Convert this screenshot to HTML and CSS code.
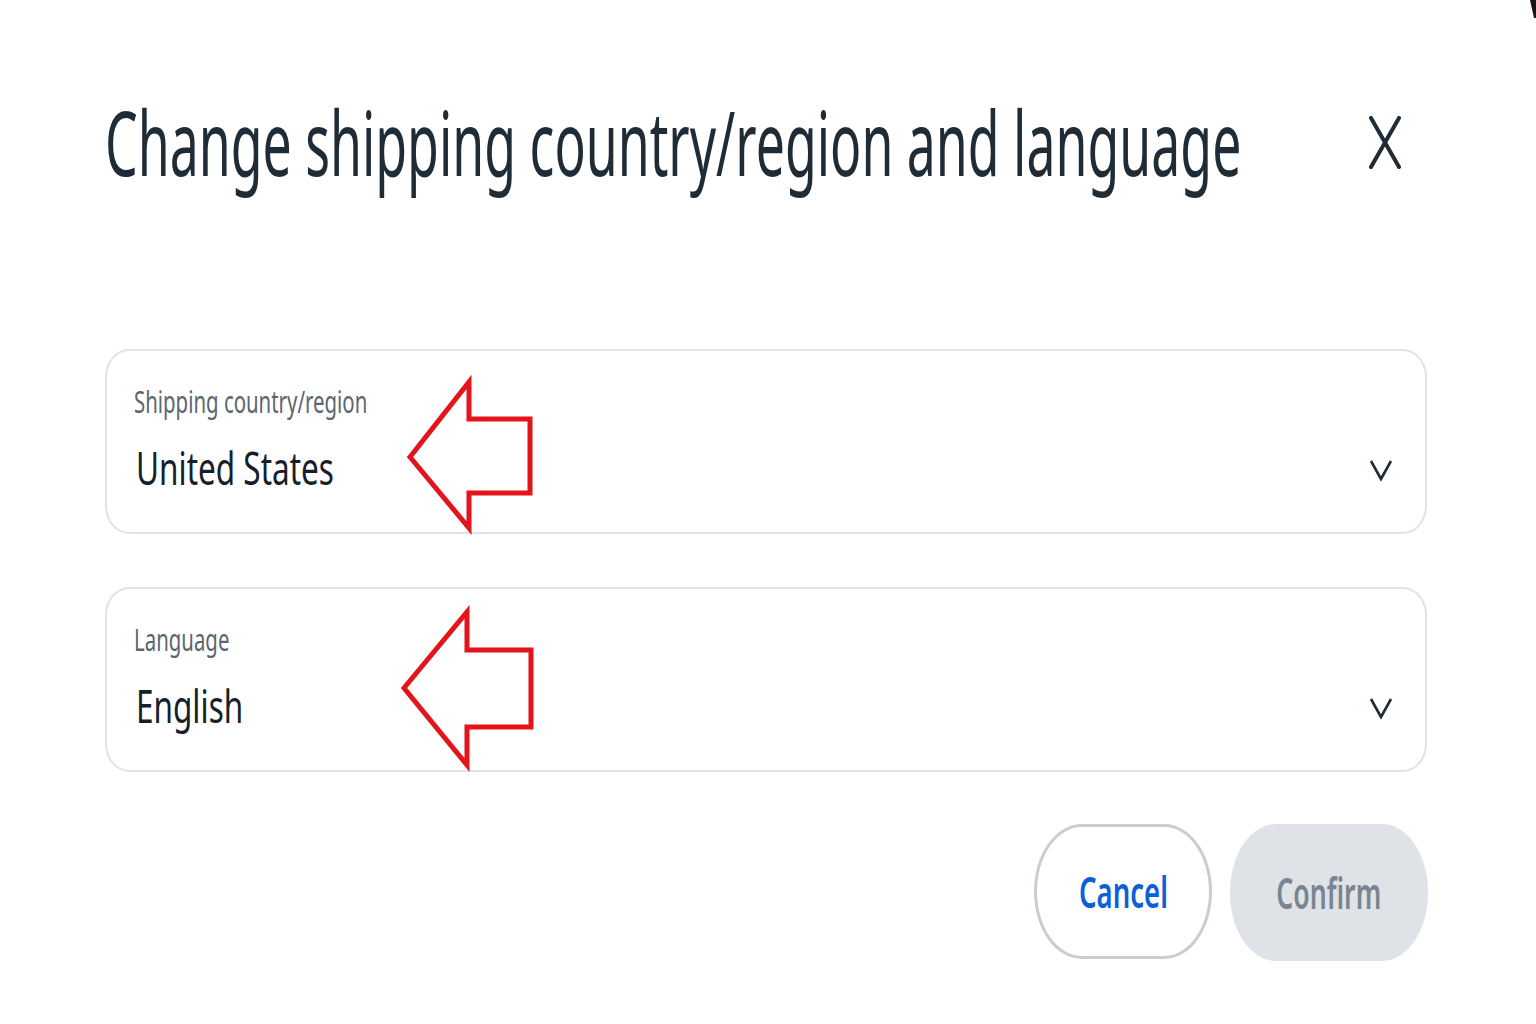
FILE: index.html
```html
<!DOCTYPE html>
<html lang="en">
<head>
<meta charset="utf-8">
<title>Change shipping country/region and language</title>
<link rel="stylesheet" href="styles.css">
</head>
<body>
<div class="dialog">
  <div class="header">
    <div class="title-wrap"><h1 class="title"><span class="tall">Change shipping country/region and language</span></h1></div>
    <svg class="close" width="34" height="53" viewBox="0 0 34 53" aria-label="Close">
      <path d="M3 2 L31 51 M31 2 L3 51" stroke="#1f2b35" stroke-width="4" stroke-linecap="round" fill="none"/>
    </svg>
  </div>

  <div class="field first">
    <div class="field-text">
      <div class="label"><span class="sq sq-label">Shipping country/region</span></div>
      <div class="value"><span class="sq sq-value">United States</span></div>
    </div>
    <svg class="chev" width="24" height="24" viewBox="0 0 24 24"><path d="M2 3 L12 21 L22 3" stroke="#1f2b35" stroke-width="2.6" fill="none" stroke-linejoin="miter"/></svg>
  </div>

  <div class="field second">
    <div class="field-text">
      <div class="label"><span class="sq sq-label">Language</span></div>
      <div class="value"><span class="sq sq-value">English</span></div>
    </div>
    <svg class="chev" width="24" height="24" viewBox="0 0 24 24"><path d="M2 3 L12 21 L22 3" stroke="#1f2b35" stroke-width="2.6" fill="none" stroke-linejoin="miter"/></svg>
  </div>

  <div class="actions">
    <button class="btn cancel"><span class="sq sq-cancel">Cancel</span></button>
    <button class="btn confirm"><span class="sq sq-confirm">Confirm</span></button>
  </div>
</div>

<svg class="arrows" width="1536" height="1024" viewBox="0 0 1536 1024">
  <polygon points="410,457 469,382 469,419 530,419 530,493 469,493 469,528" fill="none" stroke="#e3141b" stroke-width="5" stroke-linejoin="miter"/>
  <polygon points="404,688 467,612 467,650 531,650 531,727 467,727 467,765" fill="none" stroke="#e3141b" stroke-width="5" stroke-linejoin="miter"/>
  <polygon points="1530,0 1536,0 1536,18 1534,18" fill="#1a1216"/>
</svg>
</body>
</html>
```

FILE: styles.css
```css
html, body {
  margin: 0;
  padding: 0;
  background: #ffffff;
}
body {
  width: 1536px;
  height: 1024px;
  overflow: hidden;
  font-family: "Noto Sans", "Open Sans", sans-serif;
  position: relative;
}
.dialog {
  padding-top: 98px;
}
.header {
  display: flex;
  align-items: flex-start;
  padding-left: 105px;
  padding-right: 136px;
  height: 90px;
}
.title-wrap {
  flex: 1;
  min-width: 0;
  height: 90px;
}
.title {
  margin: 0;
  font-size: 51.75px;
  line-height: 51.75px;
  font-weight: 400;
  color: #1f2b35;
  white-space: nowrap;
}
.tall {
  display: inline-block;
  transform: scaleY(1.7391);
  transform-origin: left top;
}
.sq {
  display: inline-block;
  transform-origin: left center;
  white-space: nowrap;
}
.sq-label { transform: scaleX(0.68); }
.sq-value { transform: scaleX(0.685); }
.sq-cancel { transform: scaleX(0.64); transform-origin: center center; }
.sq-confirm { transform: scaleX(0.62); transform-origin: center center; }
.close {
  margin-top: 18px;
  margin-right: -2px;
  flex: none;
}
.field {
  margin-left: 105px;
  width: 1322px;
  height: 185px;
  box-sizing: border-box;
  border: 2px solid #dfe2e6;
  border-radius: 24px / 28px;
  display: flex;
  align-items: flex-end;
  padding: 0 32px 50px 27px;
}
.field.first { margin-top: 161px; }
.field.second { margin-top: 53px; }
.field-text {
  flex: 1;
  align-self: flex-start;
  padding-top: 33px;
}
.label {
  font-size: 30px;
  line-height: 36px;
  color: #5b6670;
}
.value {
  margin-top: 19px;
  font-size: 46px;
  line-height: 56px;
  color: #16202a;
  padding-left: 2px;
}
.chev { flex: none; }
.actions {
  display: flex;
  justify-content: flex-end;
  gap: 18px;
  margin-top: 52px;
  padding-right: 108px;
}
.btn {
  font-family: "Noto Sans", "Open Sans", sans-serif;
  font-size: 43px;
  font-weight: 600;
  display: flex;
  align-items: center;
  justify-content: center;
  box-sizing: border-box;
  padding: 0;
  margin: 0;
}
.cancel {
  width: 178px;
  height: 135px;
  background: #ffffff;
  border: 3px solid #c9cdd2;
  border-radius: 48px / 68px;
  color: #0d5fd8;
}
.confirm {
  width: 198px;
  height: 137px;
  background: #dfe3e8;
  border: none;
  border-radius: 46px / 68px;
  color: #7b8590;
}
.arrows {
  position: absolute;
  left: 0;
  top: 0;
  pointer-events: none;
}
```
